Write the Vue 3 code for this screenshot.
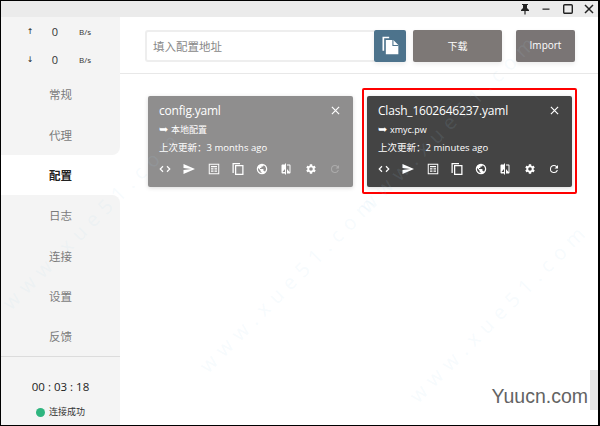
<template>
  <div class="window">
    <div class="marks">
      <span v-for="m in marks" :key="m.left" class="mark" :style="{ left: m.left + 'px', top: m.top + 'px' }">www.xue51.com</span>
    </div>

    <div class="titlebar">
      <svg class="tb-icon" viewBox="0 0 12 12"><path d="M3 1h6v1H8v3l2 2v1H6.600v3.500H5.400V8H2V7l2-2V2H3z" fill="#222" /></svg>
      <svg class="tb-icon" viewBox="0 0 12 12"><rect x="2.500" y="5.500" width="7" height="1.300" fill="#333" /></svg>
      <svg class="tb-icon" viewBox="0 0 12 12"><rect x="1.700" y="1.700" width="8.600" height="8.600" rx="1" fill="none" stroke="#222" stroke-width="1.400" /></svg>
      <svg class="tb-icon" viewBox="0 0 12 12"><path d="M2 2l8 8M10 2l-8 8" stroke="#222" stroke-width="1.500" /></svg>
    </div>

    <div class="body">
      <aside class="sidebar">
        <div class="speed">
          <div class="speed-row"><span>↑</span><b>0</b><em>B/s</em></div>
          <div class="speed-row"><span>↓</span><b>0</b><em>B/s</em></div>
        </div>
        <nav class="menu">
          <div
            v-for="(item, i) in menu"
            :key="item"
            class="menu-item"
            :class="{ active: i === 2, above: i === 1, below: i === 3 }"
          >{{ item }}</div>
        </nav>
        <div class="status">
          <div class="timer">00 : 03 : 18</div>
          <div class="state"><i></i>连接成功</div>
        </div>
      </aside>

      <main class="main">
        <header class="toolbar">
          <div class="input">填入配置地址</div>
          <button class="paste">
            <svg viewBox="0 0 24 24" width="20" height="20"><path d="M3 2h8v2H5v15H3z" fill="#fff" /><path d="M7 6h9l6 6v11H7z" fill="#fff" /><path d="M15.500 6v6.500H22" fill="none" stroke="#4d738c" stroke-width="1.300" /></svg>
          </button>
          <button class="btn download">下载</button>
          <button class="btn import">Import</button>
        </header>

        <section class="cards">
          <div v-for="card in cards" :key="card.name" class="card-wrap" :class="{ selected: card.selected }">
            <div class="card">
              <div class="card-head">
                <span class="name">{{ card.name }}</span>
                <svg class="close" viewBox="0 0 10 10"><path d="M1 1l8 8M9 1l-8 8" stroke="#fff" stroke-width="1.300" /></svg>
              </div>
              <div class="source"><span class="arrow">➥</span>{{ card.source }}</div>
              <div class="updated">上次更新：{{ card.updated }}</div>
              <div class="actions">
                <svg v-for="icon in icons" :key="icon.key" viewBox="0 0 24 24" class="action" :class="{ dim: icon.key === 'refresh' && !card.selected }">
                  <path v-if="icon.stroke" :d="icon.d" fill="none" stroke="#fff" :stroke-width="icon.stroke" />
                  <path v-else :d="icon.d" fill="#fff" fill-rule="evenodd" />
                </svg>
              </div>
            </div>
          </div>
        </section>
      </main>
    </div>

    <div class="site">Yuucn.com</div>
    <div class="scroll-tab"></div>
  </div>
</template>

<script setup>
const menu = ['常规', '代理', '配置', '日志', '连接', '设置', '反馈']

const cards = [
  { name: 'config.yaml', source: '本地配置', updated: '3 months ago', selected: false },
  { name: 'Clash_1602646237.yaml', source: 'xmyc.pw', updated: '2 minutes ago', selected: true },
]

const icons = [
  { key: 'code', d: 'M8 6.500L2.500 12 8 17.500M16 6.500l5.500 5.500-5.500 5.500', stroke: 2.4 },
  { key: 'send', d: 'M1 22l23-10L1 2v8l16 2-16 2z' },
  { key: 'table', d: 'M1.500 1.500h21v21h-21zM3.500 3.500v17h17v-17zM6 6h12v2.500H6zM6 10.500h5V13H6zM13 10.500h5V13h-5zM6 15h5v2.500H6zM13 15h5v2.500h-5z' },
  { key: 'copy', d: 'M1 0h15v2.500H3.500V20H1zM6 4h17v20H6zM8.500 6.500v15h12v-15z' },
  { key: 'globe', d: 'M12 1.500a10.500 10.500 0 1 0 0 21 10.500 10.500 0 0 0 0-21zM11 19.900A8 8 0 0 1 4.200 10.200L9 15v1c0 1.100.9 2 2 2zM17.900 17.400c-.3-.8-1-1.400-1.900-1.400h-1v-3c0-.6-.4-1-1-1H8v-2h2c.6 0 1-.4 1-1V7h2c1.100 0 2-.9 2-2v-.4A8 8 0 0 1 17.900 17.400z' },
  { key: 'compare', d: 'M10 3H5c-1.100 0-2 .9-2 2v14c0 1.100.9 2 2 2h5v2h2V1h-2zM10 18H5l5-6zM19 3h-5v2h5v13l-5-6v9h5c1.100 0 2-.9 2-2V5c0-1.100-.9-2-2-2z' },
  { key: 'gear', d: 'M19.140 12.940c.04-.3.06-.61.06-.94 0-.32-.02-.64-.07-.94l2.030-1.580c.18-.14.23-.41.12-.61l-1.920-3.320c-.12-.22-.37-.29-.59-.22l-2.390.96c-.5-.38-1.030-.7-1.620-.94l-.36-2.540c-.04-.24-.24-.41-.48-.41h-3.840c-.24 0-.43.17-.47.41l-.36 2.540c-.59.24-1.130.57-1.620.94l-2.390-.96c-.22-.08-.47 0-.59.22L2.740 8.870c-.12.21-.08.47.12.61l2.030 1.580c-.05.3-.09.63-.09.94s.02.64.07.94l-2.030 1.580c-.18.14-.23.41-.12.61l1.920 3.320c.12.22.37.29.59.22l2.390-.96c.5.38 1.030.7 1.620.94l.36 2.540c.05.24.24.41.48.41h3.840c.24 0 .44-.17.47-.41l.36-2.540c.59-.24 1.130-.56 1.620-.94l2.390.96c.22.08.47 0 .59-.22l1.920-3.320c.12-.22.07-.47-.12-.61l-2.010-1.580zM12 15.600a3.600 3.600 0 1 1 0-7.200 3.600 3.600 0 0 1 0 7.200z' },
  { key: 'refresh', d: 'M17.650 6.350A7.960 7.960 0 0 0 12 4a8 8 0 1 0 7.730 10h-2.080A6 6 0 1 1 12 6c1.660 0 3.140.69 4.220 1.780L13 11h7V4z' },
]

// lower-left start of each diagonal watermark
const marks = [
  { left: 5, top: 292 },
  { left: 202, top: 355 },
  { left: 362, top: 195 },
  { left: 412, top: 385 },
]
</script>

<style>
html,
body {
  margin: 0;
  background: #fff;
}
</style>

<style scoped>
.window {
  position: relative;
  width: 600px;
  height: 426px;
  box-sizing: border-box;
  border: 1px solid #000;
  border-width: 1px 2px 1px 1px;
  display: flex;
  flex-direction: column;
  overflow: hidden;
  font-family: "Open Sans", "Noto Sans CJK SC", sans-serif;
  background: #fff;
}

.marks {
  position: absolute;
  inset: 0;
  z-index: 5;
  pointer-events: none;
}

.mark {
  position: absolute;
  width: max-content;
  font-size: 20px;
  line-height: 26px;
  letter-spacing: 7px;
  white-space: nowrap;
  color: rgba(170, 215, 240, 0.11);
  transform: rotate(-45deg);
  transform-origin: 0 50%;
}

.titlebar {
  height: 16px;
  flex: none;
  background: #ebebeb;
  display: flex;
  justify-content: flex-end;
  align-items: center;
  gap: 9.500px;
  padding-right: 3px;
}

.tb-icon {
  width: 12px;
  height: 12px;
}

.body {
  flex: 1;
  display: flex;
  min-height: 0;
}

.sidebar {
  width: 119px;
  flex: none;
  display: flex;
  flex-direction: column;
  background: #f4f4f4;
}

.speed {
  height: 57.300px;
  box-sizing: border-box;
  padding-top: 1px;
}

.speed-row {
  height: 27.500px;
  display: grid;
  grid-template-columns: 30px 20px 40px;
  align-items: center;
  justify-items: center;
  padding-left: 14px;
  font-size: 11px;
  color: #333;
}

.speed-row span {
  font-family: "DejaVu Sans", sans-serif;
  font-size: 8px;
  color: #222;
}

.speed-row b {
  font-weight: 400;
  font-size: 11px;
}

.speed-row em {
  font-style: normal;
  font-size: 8px;
}

.menu {
  background: #fff;
}

.menu-item {
  height: 40.300px;
  display: flex;
  align-items: center;
  justify-content: center;
  font-size: 11.500px;
  color: #7b7b7b;
  background: #f4f4f4;
}

.menu-item.active {
  background: #fff;
  color: #222;
  font-weight: 700;
}

.menu-item.above {
  border-bottom-right-radius: 8px;
}

.menu-item.below {
  border-top-right-radius: 8px;
}

.status {
  flex: 1;
  border-top: 1px solid #dcdcdc;
  display: flex;
  flex-direction: column;
  align-items: center;
  padding-top: 20px;
}

.timer {
  font-size: 11.500px;
  color: #222;
  line-height: 20px;
}

.state {
  margin-top: 7px;
  display: flex;
  align-items: center;
  gap: 4px;
  font-size: 9px;
  color: #333;
  line-height: 16px;
}

.state i {
  width: 9px;
  height: 9px;
  border-radius: 50%;
  background: #2fb57f;
}

.main {
  flex: 1;
  min-width: 0;
  display: flex;
  flex-direction: column;
}

.toolbar {
  height: 57px;
  box-sizing: border-box;
  flex: none;
  border-bottom: 1px solid #e8e8e8;
  padding: 13px 0 0 25px;
  display: flex;
  align-items: flex-start;
}

.input {
  width: 229px;
  height: 32px;
  box-sizing: border-box;
  border: 2px solid #eeeeee;
  border-right: none;
  border-radius: 3px 0 0 3px;
  padding: 1px 0 0 6px;
  line-height: 28px;
  font-size: 11.500px;
  color: #888;
}

.toolbar button {
  height: 32px;
  border: none;
  border-radius: 2px;
  padding: 0 0 2px;
  color: #fff;
  font-family: inherit;
  font-size: 10px;
  box-shadow: 0 2px 5px rgba(0, 0, 0, 0.08);
}

.paste {
  width: 32px;
  background: #4d738c;
  display: flex;
  align-items: center;
  justify-content: center;
}

.download {
  width: 89px;
  margin-left: 7px;
  background: #7d7876;
}

.import {
  width: 59px;
  margin-left: 14px;
  background: #7a7575;
}

.cards {
  display: flex;
  padding: 14px 0 0 23px;
  gap: 4px;
}

.card-wrap {
  padding: 6px 3px 5px;
  border: 2px solid transparent;
  border-radius: 2px;
}

.card-wrap.selected {
  border-color: #f00;
}

.card-wrap.selected .card {
  background: #444;
}

.card {
  width: 205px;
  height: 91px;
  box-sizing: border-box;
  padding: 5px 12px 0 11px;
  border-radius: 2px;
  background: #8f8e8e;
  color: #fff;
  box-shadow: 0 1px 4px rgba(0, 0, 0, 0.15);
}

.card-head {
  display: flex;
  justify-content: space-between;
  align-items: center;
  height: 18px;
  padding-right: 1px;
}

.name {
  font-size: 12px;
  letter-spacing: -0.2px;
}

.close {
  width: 9px;
  height: 9px;
}

.source {
  margin-top: 3px;
  height: 16px;
  line-height: 16px;
  font-size: 9px;
}

.arrow {
  font-size: 11px;
  line-height: 12px;
  margin-right: 3px;
}

.updated {
  margin-top: 2px;
  height: 16px;
  line-height: 16px;
  font-size: 9.500px;
}

.actions {
  margin-top: 7px;
  display: flex;
  justify-content: space-between;
}

.action {
  width: 12px;
  height: 12px;
}

.action.dim {
  opacity: 0.25;
}

.site {
  position: absolute;
  right: 10px;
  bottom: 19px;
  z-index: 6;
  font-family: "Liberation Sans", sans-serif;
  font-size: 19.500px;
  line-height: 20px;
  color: #636363;
}

.scroll-tab {
  position: absolute;
  right: -2px;
  bottom: 15px;
  width: 10px;
  height: 40px;
  background: #e6e6e6;
}
</style>
